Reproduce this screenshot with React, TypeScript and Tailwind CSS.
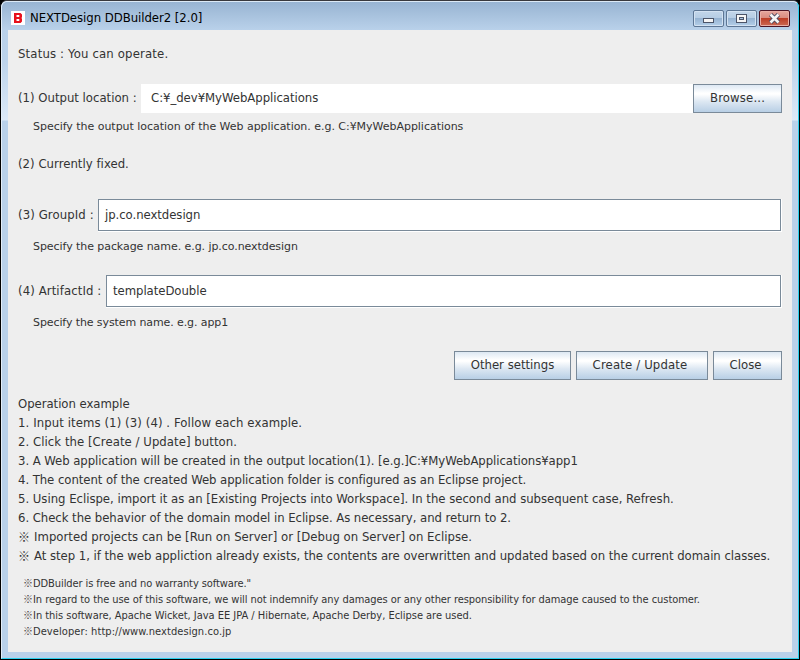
import type { ReactNode } from "react";

const steps: [string, string][] = [
  ["Operation example", "tracking-[-0.04px]"],
  ["1. Input items (1) (3) (4) . Follow each example.", "tracking-[0.09px]"],
  ["2. Click the [Create / Update] button.", "tracking-[0.05px]"],
  ["3. A Web application will be created in the output location(1). [e.g.]C:¥MyWebApplications¥app1", "tracking-[-0.055px]"],
  ["4. The content of the created Web application folder is configured as an Eclipse project.", "tracking-[-0.06px]"],
  ["5. Using Eclispe, import it as an [Existing Projects into Workspace]. In the second and subsequent case, Refresh.", "tracking-[-0.02px]"],
  ["6. Check the behavior of the domain model in Eclipse. As necessary, and return to 2.", "tracking-[-0.05px]"],
];

const remarks: [string, string][] = [
  ["Imported projects can be [Run on Server] or [Debug on Server] on Eclipse.", "tracking-[0.02px]"],
  ["At step 1, if the web appliction already exists, the contents are overwritten and updated based on the current domain classes.", "tracking-[-0.035px]"],
];

const notices: [string, string][] = [
  ['DDBuilder is free and no warranty software."', "tracking-[-0.085px]"],
  ["In regard to the use of this software, we will not indemnify any damages or any other responsibility for damage caused to the customer.", "tracking-[-0.062px]"],
  ["In this software, Apache Wicket, Java EE JPA / Hibernate, Apache Derby, Eclipse are used.", "tracking-[-0.025px]"],
  ["Developer: http://www.nextdesign.co.jp", "tracking-[0.08px]"],
];

function Button({ className, children }: { className: string; children: ReactNode }) {
  return (
    <button
      className={`h-[29px] shrink-0 border border-[#7a8a99] bg-[linear-gradient(#dde8f3_0%,#ffffff_30%,#ffffff_34%,#dce7f2_62%,#b8cfe5_100%)] pb-0.5 text-center leading-[25px] ${className}`}
    >
      {children}
    </button>
  );
}

function Hint({ className, children }: { className: string; children: ReactNode }) {
  return <p className={`h-5 pl-[15px] font-['DejaVu_Sans',sans-serif] text-[11px] leading-[22px] ${className}`}>{children}</p>;
}

function Field({ label, labelClass, value }: { label: string; labelClass: string; value: string }) {
  return (
    <div className="flex h-[33px]">
      <label className={`shrink-0 leading-[31px] ${labelClass}`}>{label}</label>
      <div className="flex-1 border-r border-b border-white">
        <div className="h-8 border border-[#7a8a99] bg-white pl-1.5 leading-[30px] tracking-[-0.05px]">{value}</div>
      </div>
    </div>
  );
}

function Caption({ danger, children }: { danger?: boolean; children: ReactNode }) {
  const tone = danger
    ? "border-[#4b1424] bg-[linear-gradient(#e6a69d_0%,#d98b7e_48%,#bd3e27_50%,#cc6a54_100%)] shadow-[inset_0_0_0_1px_#e9aea5]"
    : "border-[#5d7694] bg-[linear-gradient(#c3d6ea_0%,#b5cce4_48%,#96b3d2_50%,#b4cfe9_100%)] shadow-[inset_0_0_0_1px_#d3e2f2]";
  return (
    <button className={`flex h-[17px] w-[31px] items-center justify-center rounded-[2px] border ${tone}`}>
      <svg width="13" height="11" viewBox="0 0 13 11" shapeRendering="crispEdges">
        {children}
      </svg>
    </button>
  );
}

export default function App() {
  return (
    <div className="h-[660px] w-[800px] overflow-hidden bg-black font-['DejaVu_Sans_Condensed','DejaVu_Sans','Noto_Sans_CJK_JP',sans-serif] text-[13px] whitespace-nowrap text-[#333333]">
      <div className="flex h-[660px] w-full flex-col rounded-t-[7px] border border-black border-t-[#38383c] bg-[#b9d1ea]">
        <div className="flex min-h-0 flex-1 flex-col rounded-t-[6px] border border-t-[#dce9f5] border-r-[#2bd0ee] border-b-[#2bd0ee] border-l-[#e3eef9] bg-[linear-gradient(#98b4d2_0px,#b9d1ea_28px,#bcd3eb_58px,#dce9f7_118px,#b9d1ea_119px)]">
          <header className="flex h-7 shrink-0 items-center pl-[9px] text-black">
            <svg width="14" height="14" viewBox="0 0 14 14" className="mt-1 shrink-0">
              <rect width="14" height="14" fill="#fff" />
              <path fill="#e8111d" fillRule="evenodd" d="M3 2h6.500L11 3.500V6L10.500 7l.5 1v2.500L9.500 12H3zM5.500 4v2H8.300V4zM5.500 8v2H8.300V8z" />
            </svg>
            <h1 className="mt-1 ml-[5px] flex-1 leading-5 tracking-[-0.04px]">NEXTDesign DDBuilder2 [2.0]</h1>
            <div className="mt-[5px] mr-2 flex gap-0.5">
              <Caption>
                <path fill="#4c5468" d="M1 5h11v5H1z" />
                <path fill="#f5f5f5" d="M2 6h9v3H2z" />
              </Caption>
              <Caption>
                <path fill="#4c5468" d="M1 1h11v9H1z" />
                <path fill="#f5f5f5" d="M2 2h9v7H2z" />
                <path fill="#4c5468" d="M4 4h5v3H4z" />
                <path fill="#a9c3df" d="M5 5h3v1H5z" />
              </Caption>
              <Caption danger>
                <path fill="none" stroke="#4c4a60" strokeWidth="4.500" shapeRendering="auto" d="M2.500 1.500l8 8M10.500 1.500l-8 8" />
                <path fill="none" stroke="#f5f5f5" strokeWidth="2.600" shapeRendering="auto" d="M2.500 1.500l8 8M10.500 1.500l-8 8" />
              </Caption>
            </div>
          </header>

          <main className="mx-1.5 mb-1.5 min-h-0 flex-1 bg-[#eeeeee] pr-2.5 pl-2.5">
            <p className="mt-3.5 h-5 leading-5 tracking-[0.16px]">Status : You can operate.</p>

            <div className="mt-5 flex h-[29px]">
              <label className="w-[123px] shrink-0 leading-[27px]">(1) Output location :</label>
              <div className="flex-1 bg-white pl-2.5 leading-[27px] tracking-[-0.04px]">C:¥_dev¥MyWebApplications</div>
              <Button className="w-[89px] tracking-[0.15px]">Browse...</Button>
            </div>
            <Hint className="mt-[3px] tracking-[-0.03px]">
              Specify the output location of the Web application. e.g. C:¥MyWebApplications
            </Hint>

            <p className="mt-[17px] h-5 leading-[21px] tracking-[0.03px]">(2) Currently fixed.</p>

            <div className="mt-[26px]">
              <Field label="(3) GroupId :" labelClass="w-20 tracking-[0.1px]" value="jp.co.nextdesign" />
            </div>
            <Hint className="mt-1 tracking-[-0.065px]">Specify the package name. e.g. jp.co.nextdesign</Hint>

            <div className="mt-[19px]">
              <Field label="(4) ArtifactId :" labelClass="w-[88px] tracking-[0.1px]" value="templateDouble" />
            </div>
            <Hint className="mt-1 tracking-[-0.1px]">Specify the system name. e.g. app1</Hint>

            <div className="mt-[19px] flex justify-end gap-[5px]">
              <Button className="w-[117px]">Other settings</Button>
              <Button className="w-[132px] pr-1 tracking-[0.15px]">Create / Update</Button>
              <Button className="w-[69px] pr-1">Close</Button>
            </div>

            <div className="mt-3.5">
              {steps.map(([text, tracking]) => (
                <p key={text} className={`h-[19px] leading-[19px] ${tracking}`}>{text}</p>
              ))}
              {remarks.map(([text, tracking]) => (
                <p key={text} className="flex h-[19px] leading-[19px]">
                  <span className="w-4 font-['Noto_Sans_CJK_JP',sans-serif] text-[12px] font-light">※</span>
                  <span className={tracking}>{text}</span>
                </p>
              ))}
            </div>

            <div className="mt-2.5 pl-[5px] text-[11px]">
              {notices.map(([text, tracking]) => (
                <p key={text} className="flex h-4">
                  <span className="w-2.5 font-['Noto_Sans_CJK_JP',sans-serif] text-[10px] leading-4 font-light text-[#4a443e]">※</span>
                  <span className={`leading-[18px] ${tracking}`}>{text}</span>
                </p>
              ))}
            </div>
          </main>
        </div>
      </div>
    </div>
  );
}
